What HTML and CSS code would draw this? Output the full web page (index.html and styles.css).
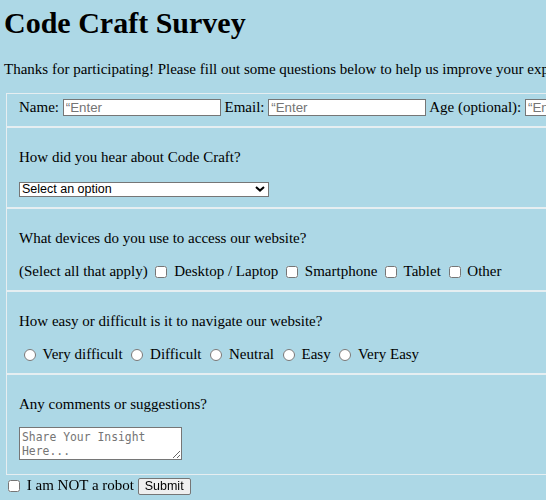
FILE: index.html
```html
<!DOCTYPE html>
<html lang="en">
<head>
<meta charset="utf-8">
<title>Code Craft Survey</title>
<link rel="stylesheet" href="styles.css">
</head>
<body>
<div class="page">
  <h1 class="title">Code Craft Survey</h1>
  <p class="intro">Thanks for participating! Please fill out some questions below to help us improve your experience with Code Craft.</p>
  <form class="survey">
    <fieldset class="group group-info">
      <label class="lbl" for="name">Name:</label> <input class="text-in" id="name" type="text" placeholder="&ldquo;Enter"> <label class="lbl" for="email">Email:</label> <input class="text-in" id="email" type="email" placeholder="&ldquo;Enter"> <label class="lbl" for="age">Age (optional):</label> <input class="text-in" id="age" type="number" placeholder="&ldquo;Enter">
    </fieldset>
    <fieldset class="group">
      <p class="question">How did you hear about Code Craft?</p>
      <span class="select-wrap">
        <select class="dropdown">
          <option>Select an option</option>
          <option>Search engine</option>
          <option>Social media</option>
          <option>A friend</option>
        </select>
        <svg class="chevron" width="10" height="6" viewBox="0 0 10 6" aria-hidden="true"><path d="M1 1 L5 4.6 L9 1" fill="none" stroke="#000" stroke-width="2"/></svg>
      </span>
    </fieldset>
    <fieldset class="group">
      <p class="question">What devices do you use to access our website?</p>
      <span class="hint">(Select all that apply)</span> <input class="check" type="checkbox" id="d1"> <label for="d1">Desktop / Laptop</label> <input class="check" type="checkbox" id="d2"> <label for="d2">Smartphone</label> <input class="check" type="checkbox" id="d3"> <label for="d3">Tablet</label> <input class="check" type="checkbox" id="d4"> <label for="d4">Other</label>
    </fieldset>
    <fieldset class="group">
      <p class="question">How easy or difficult is it to navigate our website?</p>
      <input class="radio" type="radio" name="ease" id="e1"> <label for="e1">Very difficult</label> <input class="radio" type="radio" name="ease" id="e2"> <label for="e2">Difficult</label> <input class="radio" type="radio" name="ease" id="e3"> <label for="e3">Neutral</label> <input class="radio" type="radio" name="ease" id="e4"> <label for="e4">Easy</label> <input class="radio" type="radio" name="ease" id="e5"> <label for="e5">Very Easy</label>
    </fieldset>
    <fieldset class="group">
      <p class="question question-tight">Any comments or suggestions?</p>
      <textarea class="comments" placeholder="Share Your Insight Here..."></textarea>
    </fieldset>
    <div class="robot-row">
      <input class="check robot" type="checkbox" id="robot"> <label for="robot">I am NOT a robot</label> <button class="submit" type="submit">Submit</button>
    </div>
  </form>
</div>
</body>
</html>
```
FILE: styles.css
```css
html {
  overflow: hidden;
  background: #add8e6;
}

body {
  margin: 0;
  background: #add8e6;
  color: #000;
  font-family: "Liberation Serif", "Times New Roman", serif;
  font-size: 15px;
}

.page {
  width: 1000px;
  padding: 6px 4px 0;
}

.title {
  margin: 0 0 21px;
  font-size: 30px;
  font-weight: bold;
}

.intro {
  margin: 0 0 15px;
  white-space: nowrap;
}

.survey {
  margin: 0;
}

.group {
  margin: 0 2px;
  padding: 5px 12px 10px;
  border: 1px solid #e6eef1;
  min-width: 0;
}

.group-info {
  white-space: nowrap;
}

.question {
  margin: 16px 0;
}

.question-tight {
  margin-bottom: 14px;
}

.text-in {
  box-sizing: border-box;
  width: 158px;
  height: 17px;
  padding: 0 2px;
  margin: 0;
  border: 1px solid #767676;
  border-radius: 0;
  background: #fff;
  font-family: "Liberation Sans", Arial, sans-serif;
  font-size: 13.33px;
}

.text-in::placeholder {
  color: #757575;
}

.select-wrap {
  position: relative;
  display: block;
  width: 250px;
}

.dropdown {
  display: block;
  box-sizing: border-box;
  width: 250px;
  height: 15px;
  margin: 0;
  padding: 0 2px;
  border: 1px solid #767676;
  border-radius: 0;
  background: #fff;
  font-family: "Liberation Sans", Arial, sans-serif;
  font-size: 12.5px;
  line-height: 13px;
  color: #000;
  appearance: none;
  -webkit-appearance: none;
}

.chevron {
  position: absolute;
  right: 4px;
  top: 4px;
  pointer-events: none;
}

.check {
  width: 12px;
  height: 12px;
  margin: 0 3px 0 4px;
  vertical-align: -2px;
}

.radio {
  width: 12px;
  height: 12px;
  margin: 0 3px 0 5px;
  vertical-align: -2px;
}

.comments {
  box-sizing: border-box;
  width: 163px;
  height: 33px;
  margin: 0;
  padding: 2px;
  border: 1px solid #767676;
  border-radius: 0;
  background: #fff;
  font-family: "DejaVu Sans Mono", "Liberation Mono", monospace;
  font-size: 11.4px;
  line-height: 14px;
}

.comments::placeholder {
  color: #757575;
}

.robot-row {
  padding-top: 2px;
}

.submit {
  box-sizing: border-box;
  height: 17px;
  padding: 0 6px;
  margin: 0;
  border: 1px solid #767676;
  border-radius: 2px;
  background: #efefef;
  color: #000;
  font-family: "Liberation Sans", Arial, sans-serif;
  font-size: 12.5px;
  line-height: 13px;
}
```
